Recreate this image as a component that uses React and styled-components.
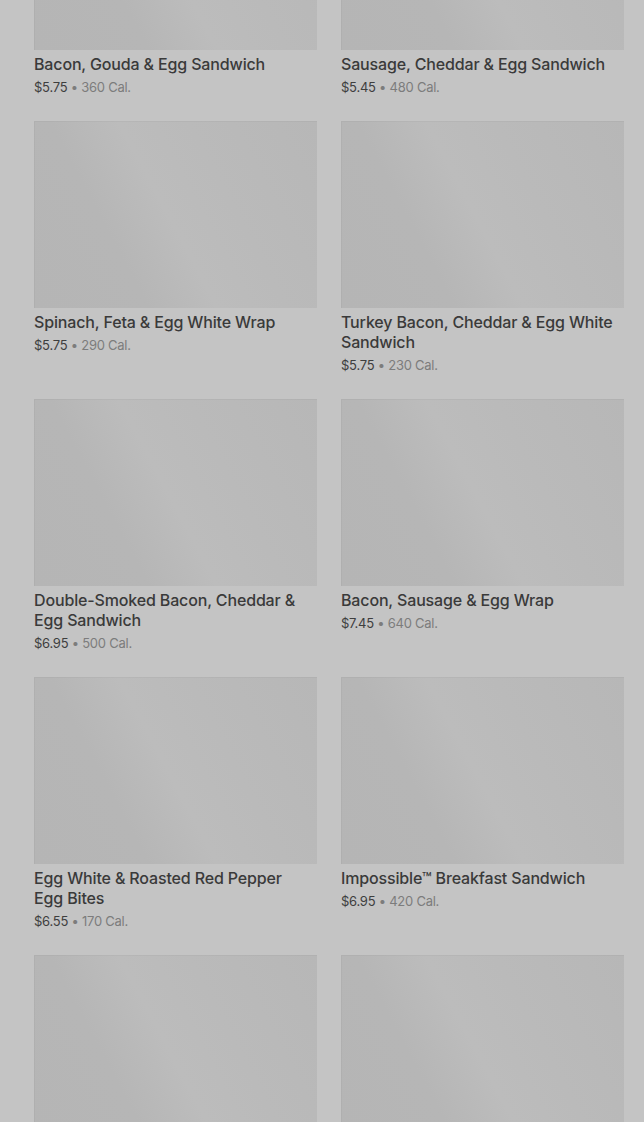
import React from 'react'
import styled, { createGlobalStyle } from 'styled-components'

const GlobalStyle = createGlobalStyle`
  html, body {
    margin: 0;
    padding: 0;
    background: #c4c4c4;
    overflow: hidden;
  }
  body {
    font-family: Inter, Roboto, 'Liberation Sans', sans-serif;
  }
`

const MenuGrid = styled.section`
  display: grid;
  grid-template-columns: repeat(2, 283px);
  column-gap: 24px;
  row-gap: 23px;
  padding: 0 20px 0 34px;
  margin-top: -137px;
`

const Card = styled.article`
  display: flex;
  flex-direction: column;
  padding-bottom: 2px;
`

const Thumb = styled.div`
  height: 187px;
  background: linear-gradient(
    62deg,
    #b5b5b5 0%,
    #b6b6b6 30%,
    #bcbcbc 48%,
    #bababa 66%,
    #b7b7b7 100%
  );
  box-shadow: inset 1px 1px 0 rgba(0, 0, 0, 0.03);
`

const Name = styled.h3`
  margin: 4px 0 4px;
  padding-right: 6px;
  font-size: 16px;
  line-height: 20px;
  font-weight: 500;
  letter-spacing: -0.15px;
  color: #3a3a3a;
`

const Meta = styled.p`
  margin: 0;
  font-size: 13px;
  line-height: 18px;
  letter-spacing: -0.25px;
  color: #7c7c7c;
`

const Price = styled.span`
  color: #3e3e3e;
`

const items = [
  { name: 'Bacon, Gouda & Egg Sandwich', price: '$5.75', cal: 360 },
  { name: 'Sausage, Cheddar & Egg Sandwich', price: '$5.45', cal: 480 },
  { name: 'Spinach, Feta & Egg White Wrap', price: '$5.75', cal: 290 },
  { name: 'Turkey Bacon, Cheddar & Egg White Sandwich', price: '$5.75', cal: 230 },
  { name: 'Double-Smoked Bacon, Cheddar & Egg Sandwich', price: '$6.95', cal: 500 },
  { name: 'Bacon, Sausage & Egg Wrap', price: '$7.45', cal: 640 },
  { name: 'Egg White & Roasted Red Pepper Egg Bites', price: '$6.55', cal: 170 },
  { name: 'Impossible™ Breakfast Sandwich', price: '$6.95', cal: 420 },
  { name: '', price: '', cal: null },
  { name: '', price: '', cal: null },
]

const App = () => {
  return (
    <>
      <GlobalStyle />
      <MenuGrid>
        {items.map((item, i) => (
          <Card key={i}>
            <Thumb />
            {item.name && (
              <>
                <Name>{item.name}</Name>
                <Meta>
                  <Price>{item.price}</Price> • {item.cal} Cal.
                </Meta>
              </>
            )}
          </Card>
        ))}
      </MenuGrid>
    </>
  )
}

export default App
